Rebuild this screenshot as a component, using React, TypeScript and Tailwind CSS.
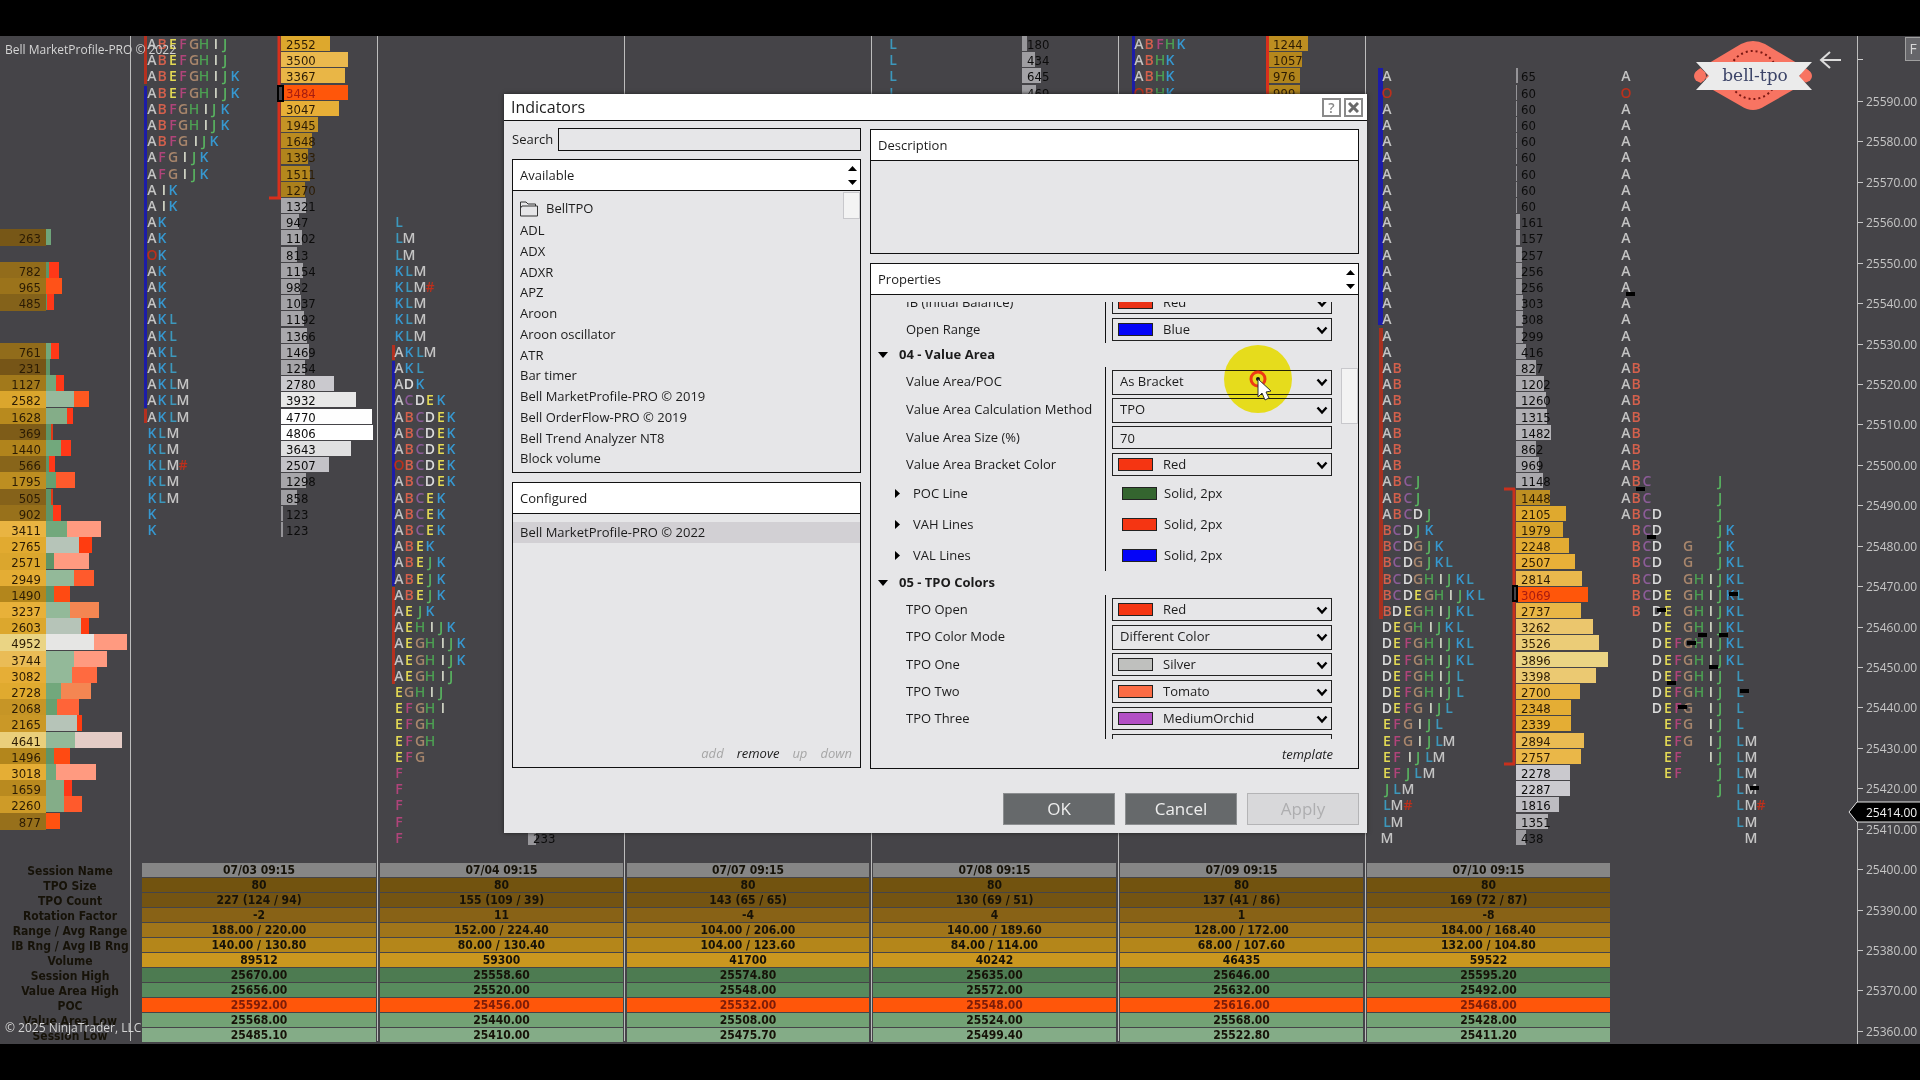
import { useState } from "react";

type Bar = { row: number; value: number };
type DepthRow = [row: number, value: number, bid: number, ask: number, bidColor: string, askColor: string];
type TpoRow = [row: number, letters: string];

const FIRST_ROW = 8;
const ROW_PITCH = 16.2;
const LETTER_PITCH = 10.4;

const rowY = (row: number) => Math.round(FIRST_ROW + row * ROW_PITCH);

const LETTER_COLORS: Record<string, string> = {
  A: "#c4c4c4",
  B: "#d4604c",
  C: "#8c5c98",
  D: "#dcdcdc",
  E: "#e4da54",
  F: "#b0447a",
  G: "#a8866c",
  H: "#4c9e52",
  I: "#d4d8c8",
  J: "#58b460",
  K: "#3698d0",
  L: "#3c98bc",
  M: "#c4c4c4",
  O: "#bc301c",
  "#": "#bc301c",
};

const GOLD: [number, number[]][] = [
  [0, [104, 74, 20]],
  [0.1, [133, 98, 26]],
  [0.3, [179, 134, 28]],
  [0.42, [198, 149, 38]],
  [0.54, [223, 169, 46]],
  [0.66, [233, 177, 58]],
  [0.84, [235, 198, 110]],
  [1, [234, 212, 132]],
];

const GREY: [number, number[]][] = [
  [0, [148, 147, 151]],
  [0.25, [165, 164, 168]],
  [0.6, [204, 203, 208]],
  [0.82, [232, 232, 232]],
  [1, [255, 255, 255]],
];

function shade(stops: [number, number[]][], t: number) {
  const hi = Math.max(1, stops.findIndex(([at]) => at >= Math.min(t, 1)));
  const [a, from] = stops[hi - 1];
  const [b, to] = stops[hi];
  const k = (Math.min(t, 1) - a) / (b - a);
  return `rgb(${from.map((c, i) => Math.round(c + (to[i] - c) * k)).join(",")})`;
}

const toBars = (start: number, values: number[]): Bar[] => values.map((value, i) => ({ row: start + i, value }));
const toRows = (start: number, text: string): TpoRow[] => text.split(" ").map((letters, i) => [start + i, letters]);

const VOLUME_0703 = toBars(0, [
  2552, 3500, 3367, 3484, 3047, 1945, 1648, 1393, 1511, 1270, 1321, 947, 1102, 813, 1154, 982, 1037, 1192, 1366, 1469,
  1254, 2780, 3932, 4770, 4806, 3643, 2507, 1298, 858, 123, 123,
]);
const VOLUME_0710 = toBars(2, [
  65, 60, 60, 60, 60, 60, 60, 60, 60, 161, 157, 257, 256, 256, 303, 308, 299, 416, 827, 1202, 1260, 1315, 1482, 862, 969,
  1148, 1448, 2105, 1979, 2248, 2507, 2814, 3069, 2737, 3262, 3526, 3896, 3398, 2700, 2348, 2339, 2894, 2757, 2278, 2287,
  1816, 1351, 438,
]);

const TPO_0703 = toRows(
  0,
  "ABEFGHIJ ABEFGHIJ ABEFGHIJK ABEFGHIJK ABFGHIJK ABFGHIJK ABFGIJK AFGIJK AFGIJK AIK AIK AK AK OK AK AK AK AKL AKL AKL AKL AKLM AKLM AKLM KLM KLM KLM# KLM KLM K K",
);
const TPO_0704 = toRows(
  11,
  "L LM LM KLM KLM# KLM KLM KLM AKLM AKL ADK ACDEK ABCDEK ABCDEK ABCDEK OBCDEK ABCDEK ABCEK ABCEK ABCEK ABEK ABEJK ABEJK ABEJK AEJK AEHIJK AEGHIJK AEGHIJK AEGHIJ EGHIJ EFGHI EFGH EFGH EFG F F F F F",
);
const TPO_0710 = toRows(
  2,
  "A O A A A A A A A A A A A A A A A A AB AB AB AB AB AB AB ABCJ ABCJ ABCDJ BCDJK BCDGJK BCDGJKL BCDGHIJKL BCDEGHIJKL BDEGHIJKL DEGHIJKL DEFGHIJKL DEFGHIJKL DEFGHIJL DEFGHIJL DEFGIJL EFGIJL EFGIJLM EFIJLM EFJLM JLM LM# LM M",
);

const DEPTH: DepthRow[] = [
  [12, 263, 5, 0, "#6fa57a", "#ff3818"],
  [14, 782, 3, 10, "#5f9468", "#ff3818"],
  [15, 965, 0, 16, "#5f9468", "#ff5218"],
  [16, 485, 1, 7, "#5f9468", "#ff3818"],
  [19, 761, 5, 8, "#72a87c", "#ff3818"],
  [20, 231, 4, 0, "#5f9468", "#ff3818"],
  [21, 1127, 10, 8, "#72a87c", "#ff3818"],
  [22, 2582, 28, 15, "#97b99c", "#ff5820"],
  [23, 1628, 21, 6, "#84ad88", "#ff3818"],
  [24, 369, 5, 2, "#5f9468", "#e03a18"],
  [25, 1440, 15, 10, "#72a87c", "#ff3818"],
  [26, 566, 3, 6, "#5f9468", "#ff3818"],
  [27, 1795, 10, 19, "#67a070", "#ff5a2c"],
  [28, 505, 5, 2, "#5f9468", "#e03a18"],
  [29, 902, 7, 8, "#5f9468", "#ff3818"],
  [30, 3411, 21, 34, "#72a87c", "#ff9a80"],
  [31, 2765, 33, 13, "#b6c4b8", "#ff3c10"],
  [32, 2571, 8, 35, "#5f9468", "#ff9a80"],
  [33, 2949, 28, 20, "#93b999", "#ff5a2c"],
  [34, 1490, 8, 16, "#5f9468", "#ff4a12"],
  [35, 3237, 24, 29, "#93b999", "#f48652"],
  [36, 2603, 35, 8, "#b6c4b8", "#ff3c10"],
  [37, 4952, 48, 33, "#e6e6e4", "#ff9a80"],
  [38, 3744, 28, 33, "#93b999", "#ff9a80"],
  [39, 3082, 26, 25, "#93b999", "#ff6a40"],
  [40, 2728, 15, 30, "#72a87c", "#f48652"],
  [41, 2068, 11, 22, "#67a070", "#ff6438"],
  [42, 2165, 31, 5, "#b6c4b8", "#ff3c10"],
  [43, 4641, 29, 47, "#93b999", "#e4ccc6"],
  [44, 1496, 8, 16, "#5f9468", "#ff4a12"],
  [45, 3018, 10, 40, "#72a87c", "#ff9a80"],
  [46, 1659, 18, 8, "#84ad88", "#ff3818"],
  [47, 2260, 18, 18, "#84ad88", "#ff5a2c"],
  [48, 877, 0, 14, "#5f9468", "#ff5210"],
];

// mid point of every half-hour bracket in the split profile
const MIDPOINTS = [
  [1626, 256], [1636, 451], [1647, 499], [1729, 556], [1657, 572], [1698, 597], [1719, 597],
  [1687, 605], [1709, 629], [1667, 645], [1740, 653], [1678, 669], [1750, 750],
];

const DIVIDERS = [130, 377, 624, 871, 1118, 1365];

const NUM_FONT = "font-['DejaVu_Sans_Condensed','DejaVu_Sans',sans-serif]";
const UI_FONT = "font-['Open_Sans','Noto_Sans',sans-serif]";

function Letters({ x, rows, split = false }: { x: number; rows: TpoRow[]; split?: boolean }) {
  return (
    <g className={UI_FONT} fontSize={14} fontWeight={600} textAnchor="middle">
      {rows.map(([row, letters]) =>
        letters.split("").map((letter, i) => {
          const slot = split ? (letter === "#" ? 13 : Math.max(0, "ABCDEFGHIJKLM".indexOf(letter))) : i;
          return (
            <text
              key={`${row}-${i}`}
              x={Math.round(x + slot * LETTER_PITCH + (letter === "I" ? 2 : 0))}
              y={rowY(row) + 5}
              fill={LETTER_COLORS[letter]}
            >
              {letter}
            </text>
          );
        }),
      )}
    </g>
  );
}

type VolumeProps = { x: number; bars: Bar[]; scale: number; max: number; from?: number; to?: number; poc?: number };

function Volume({ x, bars, scale, max, from = -1, to = -1, poc = -1 }: VolumeProps) {
  return (
    <g className={NUM_FONT} fontSize={13}>
      {bars.map(({ row, value }) => {
        const inArea = row >= from && row <= to;
        const fill = row === poc ? "#ff560a" : shade(inArea ? GOLD : GREY, value / max);
        return (
          <g key={row}>
            <rect x={x} y={rowY(row) - 8} width={Math.max(1, Math.round(value * scale))} height={15} fill={fill} />
            <text x={x + 5} y={rowY(row) + 5} fill={row === poc ? "#a81c10" : inArea ? "#2c1c04" : "#0c0c0c"}>
              {value}
            </text>
          </g>
        );
      })}
    </g>
  );
}

function Logo() {
  return (
    <g>
      <path
        d="M1741 8 Q1753 2 1765 8 L1807 33 Q1815 39 1807 46 L1765 70 Q1753 78 1741 70 L1699 46 Q1691 39 1699 33 Z"
        fill="#f87462"
      />
      <circle cx={1753} cy={39} r={24} fill="none" stroke="#7a1712" strokeWidth={2} strokeDasharray="2 3" />
      <path d="M1694 26 L1708 39 L1694 55 L1712 55 L1704 39 L1712 26 Z" fill="#454448" />
      <circle cx={1700} cy={40} r={6} fill="#f87462" />
      <path d="M1813 26 L1799 39 L1813 55 L1795 55 L1803 39 L1795 26 Z" fill="#454448" />
      <circle cx={1806} cy={40} r={6} fill="#f87462" />
      <path d="M1696 26 H1812 L1799 40 L1812 54 H1696 L1709 40 Z" fill="#ebebeb" />
      <text x={1755} y={45} textAnchor="middle" fontSize={17} fill="#3c4468" className="font-['DejaVu_Serif',serif]">
        bell-tpo
      </text>
      <path d="M1841 24 H1822 M1830 16 L1821 24 L1830 32" fill="none" stroke="#dcdcdc" strokeWidth={2} />
    </g>
  );
}

function Chart() {
  return (
    <svg className="absolute inset-0 h-full w-full" aria-label="Market profile chart">
      {DIVIDERS.map((x) => (
        <rect key={x} x={x} y={0} width={1} height={1005} fill="#bdbdbd" />
      ))}

      {DEPTH.map(([row, value, bid, ask, bidColor, askColor]) => (
        <g key={row}>
          <rect x={0} y={rowY(row) - 9} width={46} height={17} fill={shade(GOLD, value / 4952)} />
          <rect x={46} y={rowY(row) - 9} width={bid} height={16} fill={bidColor} />
          <rect x={46 + bid} y={rowY(row) - 9} width={ask} height={16} fill={askColor} />
          <text x={41} y={rowY(row) + 5} textAnchor="end" fontSize={13} fill="#2c1c04" className={NUM_FONT}>
            {value}
          </text>
        </g>
      ))}

      <rect x={144} y={0} width={3} height={48} fill="#b5301f" />
      <rect x={144} y={50} width={3} height={322} fill="#1c1ca8" />
      <rect x={144} y={373} width={3} height={14} fill="#b5301f" />
      <Letters x={152} rows={TPO_0703} />
      <Volume x={281} bars={VOLUME_0703} scale={0.0191} max={4806} from={0} to={9} poc={3} />
      <path d="M279 0 V162 M269 162 H281" fill="none" stroke="#d8301c" strokeWidth={3} />
      <rect x={278} y={50} width={5} height={15} fill="#454448" stroke="#000" strokeWidth={2} />

      <rect x={392} y={309} width={3} height={15} fill="#b5301f" />
      <rect x={392} y={325} width={3} height={225} fill="#1c1ca8" />
      <rect x={392} y={551} width={3} height={97} fill="#b5301f" />
      <Letters x={399} rows={TPO_0704} />
      <Volume x={528} bars={toBars(49, [233])} scale={0.034} max={4000} />

      <Letters x={893} rows={toRows(0, "L L L L")} />
      <Volume x={1022} bars={toBars(0, [180, 434, 645, 469])} scale={0.03} max={3000} />

      <rect x={1132} y={0} width={3} height={70} fill="#1c1ca8" />
      <Letters x={1139} rows={toRows(0, "ABFHK ABHK ABHK OBHK")} />
      <Volume x={1268} bars={toBars(0, [1244, 1057, 976, 999])} scale={0.0325} max={3400} from={0} to={3} />
      <rect x={1266} y={0} width={3} height={70} fill="#d8301c" />

      <rect x={1378} y={32} width={5} height={257} fill="#1c1ca8" />
      <rect x={1379} y={292} width={4} height={291} fill="#a8301f" />
      <Letters x={1387} rows={TPO_0710} />
      <Volume x={1516} bars={VOLUME_0710} scale={0.0236} max={3896} from={28} to={44} poc={34} />
      <path d="M1504 453 H1515 M1514 453 V728 M1504 728 H1515" fill="none" stroke="#c8301c" strokeWidth={3} />
      <rect x={1513} y={550} width={4} height={15} fill="#454448" stroke="#000" strokeWidth={2} />

      <Letters x={1626} rows={TPO_0710} split />
      {MIDPOINTS.map(([x, y]) => (
        <rect key={`${x}-${y}`} x={x} y={y} width={9} height={4} fill="#000" />
      ))}

      <Logo />
    </svg>
  );
}

const SESSION_ROWS = [
  { label: "Session Name", bg: "bg-[#868686]", values: ["07/03 09:15", "07/04 09:15", "07/07 09:15", "07/08 09:15", "07/09 09:15", "07/10 09:15"] },
  { label: "TPO Size", bg: "bg-[#72530f]", values: ["80", "80", "80", "80", "80", "80"] },
  { label: "TPO Count", bg: "bg-[#745412]", values: ["227 (124 / 94)", "155 (109 / 39)", "143 (65 / 65)", "130 (69 / 51)", "137 (41 / 86)", "169 (72 / 87)"] },
  { label: "Rotation Factor", bg: "bg-[#886216]", values: ["-2", "11", "-4", "4", "1", "-8"] },
  { label: "Range / Avg Range", bg: "bg-[#a0751a]", values: ["188.00 / 220.00", "152.00 / 224.40", "104.00 / 206.00", "140.00 / 189.60", "128.00 / 172.00", "184.00 / 168.40"] },
  { label: "IB Rng / Avg IB Rng", bg: "bg-[#b4861a]", values: ["140.00 / 130.80", "80.00 / 130.40", "104.00 / 123.60", "84.00 / 114.00", "68.00 / 107.60", "132.00 / 104.80"] },
  { label: "Volume", bg: "bg-[#ca971f]", values: ["89512", "59300", "41700", "40242", "46435", "59522"] },
  { label: "Session High", bg: "bg-[#4d7b51]", values: ["25670.00", "25558.60", "25574.80", "25635.00", "25646.00", "25595.20"] },
  { label: "Value Area High", bg: "bg-[#588b5d]", values: ["25656.00", "25520.00", "25548.00", "25572.00", "25632.00", "25492.00"] },
  { label: "POC", bg: "bg-[#ff560a] text-[#7d1c08]", values: ["25592.00", "25456.00", "25532.00", "25548.00", "25616.00", "25468.00"] },
  { label: "Value Area Low", bg: "bg-[#73a275]", values: ["25568.00", "25440.00", "25508.00", "25524.00", "25568.00", "25428.00"] },
  { label: "Session Low", bg: "bg-[#84ac87]", values: ["25485.10", "25410.00", "25475.70", "25499.40", "25522.80", "25411.20"] },
];

function SessionTable() {
  return (
    <table
      className={`relative mt-auto mb-px w-[1614px] table-fixed border-collapse text-center text-[12px] leading-[14px] font-bold text-[#161208] ${NUM_FONT}`}
    >
      <colgroup>
        <col className="w-[142px]" />
        <col className="w-[238px]" />
        <col className="w-[247px]" />
        <col className="w-[246px]" />
        <col className="w-[247px]" />
        <col className="w-[247px]" />
        <col className="w-[247px]" />
      </colgroup>
      <tbody>
        {SESSION_ROWS.map((row) => (
          <tr key={row.label}>
            <th scope="row" className="p-0 pr-0.5 whitespace-nowrap">
              {row.label}
            </th>
            {row.values.map((value, i) => (
              <td key={i} className="p-0 pr-1 pb-px">
                <div className={`h-[14px] ${row.bg}`}>{value}</div>
              </td>
            ))}
          </tr>
        ))}
      </tbody>
    </table>
  );
}

function PriceAxis() {
  const prices = Array.from({ length: 24 }, (_, i) => 25590 - i * 10);
  const tickY = (i: number) => Math.round(65 + i * 40.43);

  return (
    <aside className="relative w-[63px] border-l border-[#bdbdbd]">
      <svg className="absolute inset-0 h-full w-full overflow-visible" aria-label="Price axis">
        <rect x={0} y={23} width={5} height={1} fill="#d0d0d0" />
        <g className={UI_FONT} fontSize={12} fill="#c6c6c6">
          {prices.map((price, i) => (
            <g key={price}>
              <rect x={0} y={tickY(i)} width={5} height={1} />
              <text x={8} y={tickY(i) + 5}>
                {price}.00
              </text>
            </g>
          ))}
          <path d="M-9 776 L-1 766 H63 V786 H-1 Z" fill="#000" stroke="#e6e6e6" />
          <text x={8} y={781} fill="#f2f2f2">
            25414.00
          </text>
        </g>
      </svg>
      <button
        type="button"
        className={`absolute top-px right-0 h-6 w-[15px] border border-r-0 border-[#a0a0a0] bg-[#66666a] text-[14px] leading-[20px] text-[#d8d8d8] ${UI_FONT}`}
      >
        F
      </button>
    </aside>
  );
}

function Spinner({ label }: { label: string }) {
  return (
    <button type="button" aria-label={label} className="flex w-4 flex-col items-center justify-center gap-[9px]">
      <svg width="9" height="5" viewBox="0 0 9 5">
        <path d="M0 5 L4.500 0 L9 5 Z" fill="#000" />
      </svg>
      <svg width="9" height="5" viewBox="0 0 9 5">
        <path d="M0 0 L4.500 5 L9 0 Z" fill="#000" />
      </svg>
    </button>
  );
}

function PanelHeader({ title, spinner = false }: { title: string; spinner?: boolean }) {
  return (
    <div className="flex h-[31px] shrink-0 justify-between border-b border-[#111] bg-white pl-[7px]">
      <h3 className="leading-[30px]">{title}</h3>
      {spinner && <Spinner label={`Scroll ${title}`} />}
    </div>
  );
}

const AVAILABLE = [
  "ADL",
  "ADX",
  "ADXR",
  "APZ",
  "Aroon",
  "Aroon oscillator",
  "ATR",
  "Bar timer",
  "Bell MarketProfile-PRO © 2019",
  "Bell OrderFlow-PRO © 2019",
  "Bell Trend Analyzer NT8",
  "Block volume",
];

function AvailablePanel() {
  return (
    <section className="relative flex h-[314px] flex-col border border-[#111]">
      <PanelHeader title="Available" spinner />
      <div className="mt-[7px] flex h-[22px] items-center gap-2 pl-[7px]">
        <svg width="18" height="16" viewBox="0 0 18 16" fill="none" stroke="#333">
          <path d="M0.500 15 V1 H6 L8 3 H15.500 V5 M0.500 15 H17.500 V5 H2 L0.500 7" />
        </svg>
        BellTPO
      </div>
      <ul className="grid h-[249px] auto-rows-fr pl-[7px] leading-[21px]">
        {AVAILABLE.map((name) => (
          <li key={name}>{name}</li>
        ))}
      </ul>
      <div className="absolute top-8 right-0 h-[27px] w-[17px] border border-[#c8c8cc] bg-[#f3f3f3]" />
    </section>
  );
}

function ConfiguredPanel() {
  return (
    <section className="mt-[9px] flex h-[286px] flex-col border border-[#111]">
      <PanelHeader title="Configured" />
      <div className="mt-2 h-[21px] bg-[#d2d0d4] pl-[7px] leading-[20px]">Bell MarketProfile-PRO © 2022</div>
      <div className="mt-auto mb-1 flex justify-end gap-[13px] pr-2 leading-[20px] italic">
        <button type="button" disabled className="text-[#a6a6a6]">add</button>
        <button type="button">remove</button>
        <button type="button" disabled className="text-[#a6a6a6]">up</button>
        <button type="button" disabled className="text-[#a6a6a6]">down</button>
      </div>
    </section>
  );
}

const FIELD = "w-[220px] rounded-none border border-[#222] bg-[#e6e6e8] outline-none";

type FieldProps = { id: string; label: string; value: string };

function FieldLabel({ id, label }: { id: string; label: string }) {
  return (
    <label htmlFor={id} className="w-[193px] shrink-0 pl-[35px] whitespace-nowrap">
      {label}
    </label>
  );
}

function Chevron() {
  return (
    <svg className="pointer-events-none absolute top-1/2 right-1 -mt-1" width="12" height="9" viewBox="0 0 12 9">
      <path d="M1.500 1.500 L6 6.500 L10.500 1.500" fill="none" stroke="#000" strokeWidth={2.4} />
    </svg>
  );
}

function ColorField({ id, label, value, color }: FieldProps & { color: string }) {
  return (
    <div className="flex h-[27px] items-center">
      <FieldLabel id={id} label={label} />
      <div className="relative ml-12">
        <select id={id} className={`block h-[23px] appearance-none pl-[50px] ${FIELD}`}>
          <option>{value}</option>
        </select>
        <span className={`pointer-events-none absolute top-[5px] left-[6px] h-[13px] w-[35px] border border-[#222] ${color}`} />
        <Chevron />
      </div>
    </div>
  );
}

function SelectField({ id, label, value }: FieldProps) {
  return (
    <div className="flex h-7 items-center">
      <FieldLabel id={id} label={label} />
      <div className="relative ml-12">
        <select id={id} className={`block h-[25px] appearance-none pl-[7px] ${FIELD}`}>
          <option>{value}</option>
        </select>
        <Chevron />
      </div>
    </div>
  );
}

function PenField({ label, color }: { label: string; color: string }) {
  return (
    <div className="flex h-[31px] items-center">
      <button type="button" className="flex w-[193px] shrink-0 items-center gap-[13px] pl-6 text-left">
        <svg width="5" height="9" viewBox="0 0 5 9">
          <path d="M0 0 L5 4.500 L0 9 Z" fill="#000" />
        </svg>
        {label}
      </button>
      <span className={`ml-[58px] h-[13px] w-[35px] border border-[#222] ${color}`} />
      <span className="ml-[7px]">Solid, 2px</span>
    </div>
  );
}

function Category({ title }: { title: string }) {
  return (
    <button type="button" className="flex h-6 items-center gap-[11px] pl-[7px] font-bold">
      <svg width="10" height="6" viewBox="0 0 10 6">
        <path d="M0 0 L5 6 L10 0 Z" fill="#000" />
      </svg>
      {title}
    </button>
  );
}

function Group({ children }: { children: React.ReactNode }) {
  return (
    <div className="relative pt-px">
      <div className="absolute inset-y-0 left-[234px] w-px bg-[#111]" />
      {children}
    </div>
  );
}

function PropertiesPanel() {
  const [areaSize, setAreaSize] = useState("70");

  return (
    <section className="relative mt-[9px] flex h-[506px] flex-col border border-[#111]">
      <PanelHeader title="Properties" spinner />
      <div className="mt-[7px] h-[437px] overflow-hidden">
        <div className="-mt-[14px]">
          <Group>
            <ColorField id="ib" label="IB (Initial Balance)" value="Red" color="bg-[#ec3317]" />
            <ColorField id="range" label="Open Range" value="Blue" color="bg-[#0404f8]" />
          </Group>
          <Category title="04 - Value Area" />
          <Group>
            <SelectField id="va-poc" label="Value Area/POC" value="As Bracket" />
            <SelectField id="va-method" label="Value Area Calculation Method" value="TPO" />
            <div className="flex h-[27px] items-center">
              <FieldLabel id="va-size" label="Value Area Size (%)" />
              <input
                id="va-size"
                value={areaSize}
                onChange={(e) => setAreaSize(e.target.value)}
                className={`ml-12 h-[23px] pl-[7px] ${FIELD}`}
              />
            </div>
            <ColorField id="va-color" label="Value Area Bracket Color" value="Red" color="bg-[#f53512]" />
            <PenField label="POC Line" color="bg-[#34652f]" />
            <PenField label="VAH Lines" color="bg-[#f53512]" />
            <PenField label="VAL Lines" color="bg-[#0404f8]" />
          </Group>
          <Category title="05 - TPO Colors" />
          <Group>
            <ColorField id="tpo-open" label="TPO Open" value="Red" color="bg-[#f53512]" />
            <SelectField id="tpo-mode" label="TPO Color Mode" value="Different Color" />
            <ColorField id="tpo-1" label="TPO One" value="Silver" color="bg-[#bfc0be]" />
            <ColorField id="tpo-2" label="TPO Two" value="Tomato" color="bg-[#fc6c45]" />
            <ColorField id="tpo-3" label="TPO Three" value="MediumOrchid" color="bg-[#b24fc4]" />
            <ColorField id="tpo-4" label="TPO Four" value="White" color="bg-white" />
          </Group>
        </div>
      </div>
      <button type="button" className="mr-[25px] mt-[5px] self-end leading-[20px] italic">
        template
      </button>
      <div className="absolute top-[104px] right-0 h-14 w-[17px] border border-[#c8c8cc] bg-[#f3f3f3]" />
    </section>
  );
}

function IndicatorsDialog() {
  return (
    <div
      role="dialog"
      aria-label="Indicators"
      className={`absolute top-[58px] left-[504px] h-[739px] w-[863px] bg-[#e6e6e8] text-[13px] text-[#1c1c1c] shadow-[0_0_4px_#222] ${UI_FONT}`}
    >
      <div className="flex h-[27px] items-center justify-between border-b border-[#111] bg-white pr-1 pl-[7px]">
        <h2 className="text-[16px] leading-[26px]">Indicators</h2>
        <div className="flex gap-[3px]">
          <button
            type="button"
            className="h-[19px] w-[19px] border-2 border-[#8a8a8a] text-[14px] leading-[15px] font-semibold text-[#8a8a8a]"
          >
            ?
          </button>
          <button
            type="button"
            aria-label="Close"
            className="flex h-[19px] w-[19px] items-center justify-center border-2 border-[#8a8a8a]"
          >
            <svg width="11" height="11" viewBox="0 0 11 11">
              <path d="M1 1 L10 10 M10 1 L1 10" stroke="#6a6a6a" strokeWidth={3} />
            </svg>
          </button>
        </div>
      </div>

      <div className="flex gap-[9px] px-2">
        <div className="w-[349px] shrink-0">
          <div className="mt-[7px] mb-2 flex h-[23px] items-center">
            <label htmlFor="search" className="w-[46px]">
              Search
            </label>
            <input id="search" className="h-[23px] flex-1 border border-[#111] px-1 outline-none" />
          </div>
          <AvailablePanel />
          <ConfiguredPanel />
        </div>
        <div className="min-w-0 flex-1 pt-2">
          <section className="h-[125px] border border-[#111]">
            <PanelHeader title="Description" />
          </section>
          <PropertiesPanel />
        </div>
      </div>

      <div className="mt-6 flex justify-end gap-[10px] pr-2 text-[17px]">
        <button type="button" className="h-8 w-28 border border-[#8c8e90] bg-[#66696b] text-[#eee]">OK</button>
        <button type="button" className="h-8 w-28 border border-[#8c8e90] bg-[#66696b] text-[#eee]">Cancel</button>
        <button type="button" disabled className="h-8 w-28 border border-[#b4b4b6] bg-[#d8d8da] text-[#aeaeb0]">Apply</button>
      </div>
    </div>
  );
}

function Pointer() {
  return (
    <div className="pointer-events-none absolute top-[309px] left-[1224px] h-[68px] w-[68px]">
      <div className="absolute inset-0 rounded-full bg-[#fff41e] mix-blend-multiply" />
      <svg className="absolute inset-0" width="68" height="68" viewBox="0 0 68 68">
        <circle cx={34} cy={34} r={7} fill="none" stroke="#ee3a14" strokeWidth={3} />
        <circle cx={34} cy={34} r={2} fill="#111" />
        <path d="M34 34 L34 52 L38 48 L41 55 L45 53 L42 47 L47 46 Z" fill="#fff" stroke="#333" />
      </svg>
    </div>
  );
}

export default function App() {
  return (
    <div className="flex min-h-screen flex-col overflow-hidden bg-black">
      <main className="relative my-9 flex flex-1 overflow-hidden bg-[#454448]">
        <div className="relative flex flex-1 flex-col">
          <Chart />
          <SessionTable />
          <p className={`absolute top-[5px] left-[5px] text-[12px] leading-[18px] text-[#d4d4d4] ${UI_FONT}`}>
            Bell MarketProfile-PRO © 2022
          </p>
          <p className={`absolute bottom-[7px] left-[5px] text-[12px] leading-[18px] text-[#d4d4d4] ${UI_FONT}`}>
            © 2025 NinjaTrader, LLC
          </p>
        </div>
        <PriceAxis />
        <IndicatorsDialog />
        <Pointer />
      </main>
    </div>
  );
}
